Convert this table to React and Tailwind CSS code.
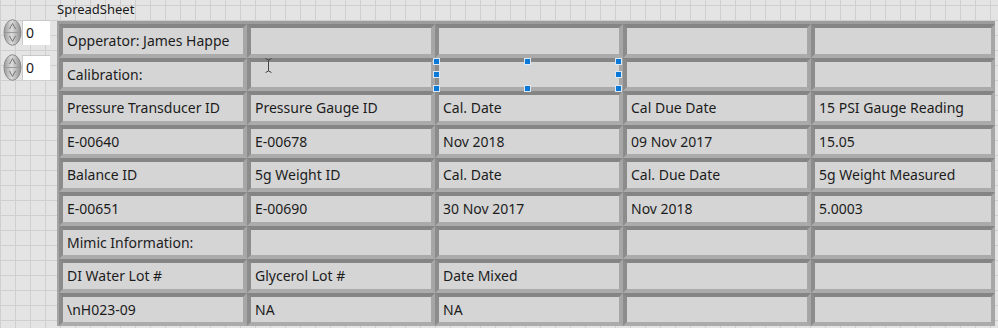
import React from 'react';

const rows = [
  ['Opperator: James Happe', '', '', '', ''],
  ['Calibration:', '', '', '', ''],
  ['Pressure Transducer ID', 'Pressure Gauge ID', 'Cal. Date', 'Cal Due Date', '15 PSI Gauge Reading'],
  ['E-00640', 'E-00678', 'Nov 2018', '09 Nov 2017', '15.05'],
  ['Balance ID', '5g Weight ID', 'Cal. Date', 'Cal. Due Date', '5g Weight Measured'],
  ['E-00651', 'E-00690', '30 Nov 2017', 'Nov 2018', '5.0003'],
  ['Mimic Information:', '', '', '', ''],
  ['DI Water Lot #', 'Glycerol Lot #', 'Date Mixed', '', ''],
  ['\\nH023-09', 'NA', 'NA', '', ''],
];

function Spinner() {
  return (
    <svg width="19" height="27" viewBox="0 0 19 27">
      <defs>
        <linearGradient id="spin" x1="0" y1="0" x2="1" y2="0">
          <stop offset="0" stopColor="#9a9a9a" />
          <stop offset="0.45" stopColor="#dcdcdc" />
          <stop offset="1" stopColor="#8e8e8e" />
        </linearGradient>
      </defs>
      <ellipse cx="9.5" cy="13.5" rx="8.5" ry="12.8" fill="url(#spin)" stroke="#8a8a8a" />
      <line x1="2" y1="13.5" x2="17" y2="13.5" stroke="#9a9a9a" />
      <path d="M6.5 10 L9.5 4.5 L12.5 10" fill="none" stroke="#6a6a6a" strokeWidth="0.9" />
      <path d="M6.5 17 L9.5 22.5 L12.5 17" fill="none" stroke="#6a6a6a" strokeWidth="0.9" />
    </svg>
  );
}

function IndexControl() {
  return (
    <div className="flex items-center h-[26px]">
      <Spinner />
      <div className="w-[28px] h-[25px] bg-white border-t border-l border-[#c8c8c8] pl-[3px] text-[14px] leading-[23px] text-[#1a1a1a]">0</div>
    </div>
  );
}

function Handle({ x, y }) {
  return (
    <div
      className="absolute w-[7px] h-[7px] bg-[#0a78d6] border border-[#dbe8f5]"
      style={{ left: x - 3.5, top: y - 3.5 }}
    />
  );
}

export default function App() {
  return (
    <div
      className="relative w-[998px] h-[328px] overflow-hidden bg-[#e4e4e4] bg-[linear-gradient(to_right,#cfcfcf_1px,transparent_1px),linear-gradient(to_bottom,#cfcfcf_1px,transparent_1px)] bg-[size:15px_15px] bg-[position:0px_5px]"
      style={{ fontFamily: '"Noto Sans", "Liberation Sans", sans-serif' }}
    >
      <div className="flex">
        <div className="w-[57px] pl-[3px] pt-[19px] flex flex-col gap-[9px]">
          <IndexControl />
          <IndexControl />
        </div>
        <div className="flex flex-col">
          <div className="h-[21px] pl-0 text-[13px] leading-[18px] text-[#1a1a1a]">SpreadSheet</div>
          <div className="border-t-[3px] border-l-[2px] border-t-[#9c9c9c] border-l-[#a4a4a4] bg-[#a8a8a8]">
            <div className="grid grid-cols-[repeat(4,188px)_184px] auto-rows-[33.6px]">
              {rows.flatMap((row, r) =>
                row.map((text, c) => (
                  <div
                    key={r + '-' + c}
                    className="border-4 border-t-[#858585] border-l-[#8c8c8c] border-b-[#ababab] border-r-[#a6a6a6] bg-[#d5d5d5] px-[4px] text-[14px] leading-[25px] text-[#1c1c1c] whitespace-nowrap overflow-hidden"
                  >
                    {text}
                  </div>
                ))
              )}
            </div>
          </div>
        </div>
      </div>

      {/* selection handles on the edited cell */}
      <Handle x={436.5} y={61} />
      <Handle x={527.5} y={61} />
      <Handle x={618.5} y={61} />
      <Handle x={436.5} y={74.5} />
      <Handle x={618.5} y={74.5} />
      <Handle x={436.5} y={88} />
      <Handle x={527.5} y={88} />
      <Handle x={618.5} y={88} />

      {/* text cursor */}
      <svg className="absolute left-[265px] top-[58px]" width="7" height="15" viewBox="0 0 7 15">
        <path d="M0.5 0.5 L3.5 2 L6.5 0.5 M3.5 2 L3.5 13 M0.5 14.5 L3.5 13 L6.5 14.5" fill="none" stroke="#444" strokeWidth="1" />
      </svg>
    </div>
  );
}
